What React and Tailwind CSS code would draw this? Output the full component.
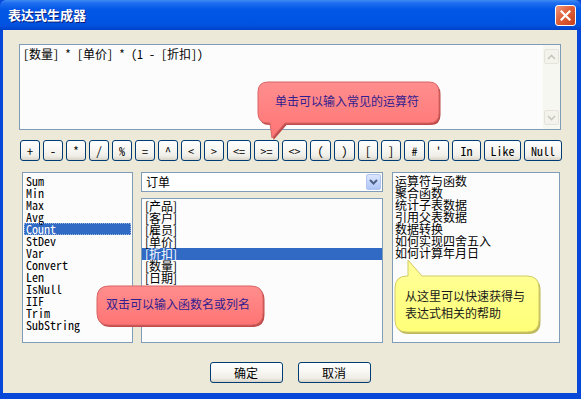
import React from "react";

const monoFont = "font-['Noto_Sans_Mono_CJK_SC','Liberation_Mono','Noto_Sans_CJK_SC',monospace]";
const cjkFont = "font-['Noto_Sans_CJK_SC','Noto_Sans',sans-serif]";
const listBoxClass = "border border-[#7F9DB9] bg-[#FCFCFC]";
const xpButtonClass =
  "h-full rounded-[3px] border border-[#003C74] bg-[linear-gradient(to_bottom,#FFFFFF_0%,#F8F7F3_45%,#EEEDE6_80%,#D9D4C8_100%)] flex items-center justify-center text-black";

const operators = [
  ["+", "w-[20px]"], ["-", "w-[20px]"], ["*", "w-[20px]"], ["/", "w-[20px]"], ["%", "w-[20px]"],
  ["=", "w-[20px]"], ["^", "w-[20px]"], ["<", "w-[20px]"], [">", "w-[20px]"], ["<=", "w-[24px]"],
  [">=", "w-[25px]"], ["<>", "w-[25px]"], ["(", "w-[21px]"], [")", "w-[21px]"], ["[", "w-[20px]"],
  ["]", "w-[20px]"], ["#", "w-[21px]"], ["'", "w-[21px]"], ["In", "w-[29px]"], ["Like", "w-[37px]"],
  ["Null", "w-[38px]"],
];

const functionNames = ["Sum", "Min", "Max", "Avg", "Count", "StDev", "Var", "Convert", "Len", "IsNull", "IIF", "Trim", "SubString"];
const fieldNames = ["[产品]", "[客户]", "[雇员]", "[单价]", "[折扣]", "[数量]", "[日期]"];
const helpTopics = ["运算符与函数", "聚合函数", "统计子表数据", "引用父表数据", "数据转换", "如何实现四舍五入", "如何计算年月日"];

function Chevron({ up = false, color, width = 2 }) {
  return (
    <svg width="9" height="6" viewBox="0 0 9 6">
      <polyline points={up ? "1,5 4.5,1.5 8,5" : "1,1 4.5,4.5 8,1"} fill="none" stroke={color} strokeWidth={width} />
    </svg>
  );
}

function Bubble({ id, path, top, bottom, edge, shade, width, height }) {
  return (
    <svg width={width} height={height} className="absolute inset-0">
      <defs>
        <linearGradient id={id} x1="0" y1="0" x2="0" y2="1">
          <stop offset="0" stopColor={top} />
          <stop offset="1" stopColor={bottom} />
        </linearGradient>
      </defs>
      <path d={path} fill={shade} transform="translate(1.5 2)" />
      <path d={path} fill={`url(#${id})`} stroke={edge} strokeWidth="1" />
    </svg>
  );
}

function ScrollArrow({ up }) {
  return (
    <div className="h-[15px] w-[15px] rounded-[2px] border border-[#E6E4DA] bg-[#F3F2EC] flex items-center justify-center">
      <Chevron up={up} color="#C9C8BF" width={1.6} />
    </div>
  );
}

export default function App() {
  return (
    <div className="w-[581px] h-[399px] bg-[#0848D8] flex flex-col overflow-hidden">
      <div className="h-[30px] shrink-0 rounded-t-[6px] bg-[linear-gradient(to_bottom,#3F8CF3_0%,#1F6EF0_10%,#0458E8_30%,#0055E5_60%,#0052DE_85%,#0040C8_100%)] flex items-center justify-between pl-[8px] pr-[5px]">
        <span className={`${cjkFont} text-[13px] font-bold text-white [text-shadow:1px_1px_0_#0A1E7A]`}>表达式生成器</span>
        <div className="h-[21px] w-[21px] rounded-[3px] border border-white bg-[linear-gradient(135deg,#EE9880_0%,#E0603A_45%,#C8401C_100%)] flex items-center justify-center">
          <svg width="11" height="11" viewBox="0 0 11 11">
            <path d="M1.5 1.5 L9.5 9.5 M9.5 1.5 L1.5 9.5" stroke="white" strokeWidth="2.2" strokeLinecap="square" />
          </svg>
        </div>
      </div>

      <div className="relative ml-[3px] mr-[4px] mb-[6px] flex-1 bg-[#ECE9D8] flex flex-col">
        <div className={`mt-[14px] ml-[16px] w-[542px] h-[86px] ${listBoxClass} flex`}>
          <div className={`flex-1 pl-[3px] pt-[2px] ${monoFont} text-[12px] leading-[14px] text-black`}>
            [数量] * [单价] * (1 - [折扣])
          </div>
          <div className="w-[17px] bg-[#F7F7F2] flex flex-col items-center justify-between py-[4px]">
            <ScrollArrow up />
            <ScrollArrow />
          </div>
        </div>

        <div className="mt-[10px] ml-[17px] h-[21px] flex gap-[3px]">
          {operators.map(([label, width]) => (
            <div key={label} className={`${xpButtonClass} ${width} ${monoFont} text-[12px] leading-none`}>
              {label}
            </div>
          ))}
        </div>

        <div className="mt-[11px] ml-[19px] h-[171px] flex">
          <div className={`w-[111px] ${listBoxClass} px-[1px] pt-[2px]`}>
            {functionNames.map((name) => (
              <div
                key={name}
                className={`h-[12px] pl-[2px] ${monoFont} text-[12px] leading-[12px] ${
                  name === "Count" ? "bg-[#316AC5] text-white outline-1 outline-dotted outline-[#9DB6E0] -outline-offset-1" : "text-black"
                }`}
              >
                {name}
              </div>
            ))}
          </div>

          <div className="ml-[8px] w-[242px] flex flex-col">
            <div className={`h-[20px] ${listBoxClass} bg-white flex items-center justify-between pl-[4px] pr-[1px]`}>
              <span className={`${cjkFont} text-[12px] text-black`}>订单</span>
              <div className="h-[16px] w-[15px] rounded-[2px] border border-[#B2C5F0] bg-[linear-gradient(to_bottom,#DCE6FD_0%,#C2D4FC_55%,#AFC4F5_100%)] flex items-center justify-center">
                <Chevron color="#4D6185" width={2} />
              </div>
            </div>
            <div className={`mt-[6px] flex-1 ${listBoxClass} pt-[1px]`}>
              {fieldNames.map((name) => (
                <div
                  key={name}
                  className={`h-[12px] pl-[3px] ${cjkFont} text-[12px] leading-[12px] ${
                    name === "[折扣]" ? "bg-[#316AC5] text-white" : "text-black"
                  }`}
                >
                  {name}
                </div>
              ))}
            </div>
          </div>

          <div className={`ml-[9px] w-[168px] ${listBoxClass} pl-[2px] pt-[2px]`}>
            {helpTopics.map((topic) => (
              <div key={topic} className={`h-[12px] ${cjkFont} text-[12px] leading-[12px] text-black`}>
                {topic}
              </div>
            ))}
          </div>
        </div>

        <div className="mt-[19px] h-[21px] flex justify-center gap-[15px]">
          <div className={`${xpButtonClass} w-[73px] ${cjkFont} text-[12px]`}>确定</div>
          <div className={`${xpButtonClass} w-[73px] ${cjkFont} text-[12px]`}>取消</div>
        </div>

        {/* callouts over the dialog */}
        <div className="absolute left-[253px] top-[50px] w-[190px] h-[62px]">
          <Bubble
            id="redTop"
            width={190}
            height={62}
            top="#FF8E8E"
            bottom="#FF7474"
            edge="#D86464"
            shade="#C04C4C"
            path="M12 2 H173 Q183 2 183 12 V33 Q183 43 173 43 H29 L16 58 L14 43 H12 Q2 43 2 33 V12 Q2 2 12 2 Z"
          />
          <span className={`absolute left-[19px] top-[14px] ${cjkFont} text-[12px] leading-[14px] text-[#32208E]`}>
            单击可以输入常见的运算符
          </span>
        </div>

        <div className="absolute left-[92px] top-[254px] w-[172px] h-[46px]">
          <Bubble
            id="redBottom"
            width={172}
            height={46}
            top="#FF8E8E"
            bottom="#FF7474"
            edge="#D86464"
            shade="#C04C4C"
            path="M14 2 H156 Q168 2 168 14 V29 Q168 41 156 41 H14 Q2 41 2 29 V14 Q2 2 14 2 Z"
          />
          <span className={`absolute left-[11px] top-[13px] ${cjkFont} text-[12px] leading-[14px] text-[#32208E]`}>
            双击可以输入函数名或列名
          </span>
        </div>

        <div className="absolute left-[390px] top-[228px] w-[152px] h-[80px]">
          <Bubble
            id="yellow"
            width={152}
            height={80}
            top="#FFFF9A"
            bottom="#FFFF78"
            edge="#D2CC6A"
            shade="#BDB85A"
            path="M14 18 H15 L15 2 L29 18 H134 Q146 18 146 30 V62 Q146 74 134 74 H14 Q2 74 2 62 V30 Q2 18 14 18 Z"
          />
          <div className={`absolute left-[12px] top-[29px] ${cjkFont} text-[12px] leading-[17px] text-[#1A1A1A]`}>
            <div>从这里可以快速获得与</div>
            <div>表达式相关的帮助</div>
          </div>
        </div>
      </div>
    </div>
  );
}
